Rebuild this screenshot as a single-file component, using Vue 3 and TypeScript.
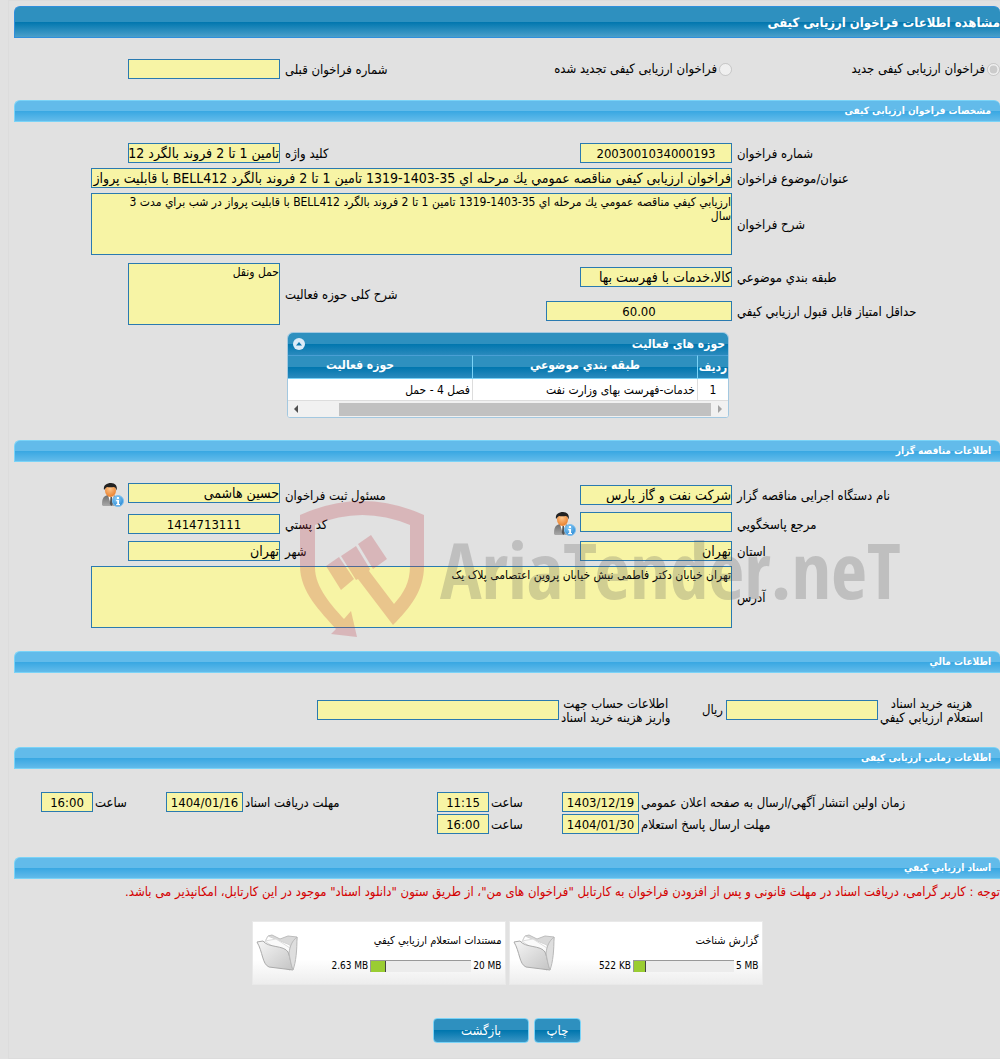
<script setup lang="ts">
import { ref } from 'vue'

interface DocumentBox {
  id: string
  title: string
  used: string
  limit: string
  percent: number
}

interface ActivityRow {
  index: number
  category: string
  field: string
}

const tenderKind = ref<'new' | 'renewed'>('new')

const activities: ActivityRow[] = [
  { index: 1, category: 'خدمات-فهرست بهای وزارت نفت', field: 'فصل 4 - حمل' },
]

const documents: DocumentBox[] = [
  { id: 'report', title: 'گزارش شناخت', used: '522 KB', limit: '5 MB', percent: 12 },
  { id: 'docs', title: 'مستندات استعلام ارزيابي كيفي', used: '2.63 MB', limit: '20 MB', percent: 15 },
]
</script>

<template>
  <main class="page" dir="rtl">
    <svg class="defs" width="0" height="0" aria-hidden="true">
      <defs>
        <linearGradient id="suit" x1="0" y1="0" x2="0" y2="1">
          <stop offset="0" stop-color="#6d6d6d" />
          <stop offset="1" stop-color="#a9a9a9" />
        </linearGradient>
        <radialGradient id="skin" cx=".45" cy=".35" r=".7">
          <stop offset="0" stop-color="#ffc98f" />
          <stop offset="1" stop-color="#e87a24" />
        </radialGradient>
        <radialGradient id="badge" cx=".4" cy=".3" r=".8">
          <stop offset="0" stop-color="#8fd0f8" />
          <stop offset="1" stop-color="#1c7fd0" />
        </radialGradient>
        <linearGradient id="flap" x1="0" y1="0" x2="1" y2="1">
          <stop offset="0" stop-color="#f6f6f6" />
          <stop offset="1" stop-color="#c4c4c4" />
        </linearGradient>
        <symbol id="person" viewBox="0 0 24 24">
          <path d="M2 22c0-6 1-9 6-10h5c4 1 6 4 6 11H3z" fill="url(#suit)" />
          <path d="M8 12l3 10 3-10z" fill="#fff" />
          <path d="M10.500 14H12l.8 7-1.500 2-1.500-2z" fill="#555" />
          <ellipse cx="10.500" cy="7.500" rx="5.500" ry="6.500" fill="url(#skin)" />
          <path d="M4 7C3 2 7 0 11 0s7 3 5.500 7.500C16 5 15 4 13.500 4c-3 .6-5 0-6.500 0C5.500 5 5 6 4 7z" fill="#222" />
          <circle cx="18" cy="18" r="5.500" fill="url(#badge)" stroke="#7fc0ee" />
          <path d="M17 14h2v2h-2zM16.200 17H19v4h1v1.200h-3.800V21h1v-2.800h-1z" fill="#fff" />
        </symbol>
        <symbol id="folder" viewBox="0 0 42 38">
          <path d="M9 8l3-6 4-1 8 4 8-3 9 1-2 17-5 16L8 26z" fill="#d9d9d9" stroke="#bdbdbd" />
          <path d="M8 10l4-8 22 9 2 14z" fill="#fff" stroke="#d2d2d2" />
          <path d="M9 7l11-2 14 9-2 10z" fill="#fafafa" stroke="#dedede" />
          <path d="M1 8l6-1c5 7 21 4 25 11 2 5 3 12 5 18L13 33C6 30 7 18 1 8z" fill="url(#flap)" stroke="#aaa" />
          <path d="M37 36c3-8 4-20 4-33-5 4-7 9-8 16 1 6 2 12 4 17z" fill="#dedede" stroke="#b9b9b9" />
        </symbol>
      </defs>
    </svg>

    <div class="panel">
      <h1 class="title">مشاهده اطلاعات فراخوان ارزیابی کیفی</h1>

      <section class="block">
        <div class="row">
          <div class="choice">
            <input id="kind-new" v-model="tenderKind" type="radio" name="kind" value="new" disabled />
            <label for="kind-new">فراخوان ارزیابی کیفی جدید</label>
          </div>
          <div class="middle">
            <div class="choice">
              <input id="kind-renewed" v-model="tenderKind" type="radio" name="kind" value="renewed" disabled />
              <label for="kind-renewed">فراخوان ارزیابی کیفی تجدید شده</label>
            </div>
            <label class="tag" for="previous">شماره فراخوان قبلی</label>
          </div>
          <input id="previous" class="field" type="text" readonly />
        </div>
      </section>

      <h2 class="bar">مشخصات فراخوان ارزیابی کیفی</h2>
      <section class="block form">
        <div class="row">
          <label class="tag" for="number">شماره فراخوان</label>
          <div class="middle">
            <input id="number" class="field num" type="text" readonly value="2003001034000193" />
            <label class="tag" for="keyword">كليد واژه</label>
          </div>
          <input id="keyword" class="field" type="text" readonly value="تامین 1 تا 2 فروند بالگرد 412" />
        </div>
        <div class="row">
          <label class="tag" for="subject">عنوان/موضوع فراخوان</label>
          <input id="subject" class="field wide" type="text" readonly value="فراخوان ارزیابی کیفی مناقصه عمومي يك مرحله اي 35-1403-1319 تامین 1 تا 2 فروند بالگرد BELL412 با قابلیت پرواز" />
        </div>
        <div class="row">
          <label class="tag" for="description">شرح فراخوان</label>
          <textarea id="description" class="field wide area" readonly>ارزيابي كيفي مناقصه عمومي يك مرحله اي 35-1403-1319 تامین 1 تا 2 فروند بالگرد BELL412 با قابلیت پرواز در شب براي مدت 3&#10;سال</textarea>
        </div>
        <div class="row double">
          <label class="tag upper" for="category">طبقه بندي موضوعي</label>
          <div class="middle upper">
            <input id="category" class="field" type="text" readonly value="کالا،خدمات با فهرست بها" />
          </div>
          <label class="tag tall" for="activity">شرح کلی حوزه فعالیت</label>
          <textarea id="activity" class="field area tall-field" readonly>حمل ونقل</textarea>
          <label class="tag lower" for="score">حداقل امتیاز قابل قبول ارزيابي كيفي</label>
          <div class="middle lower">
            <input id="score" class="field score num" type="text" readonly value="60.00" />
          </div>
        </div>

        <div class="grid-box">
          <div class="grid-title">
            <span>حوزه های فعالیت</span>
            <button type="button" class="fold" aria-label="بستن جدول">
              <svg viewBox="0 0 12 12" width="12" height="12"><path d="M3 7.500L6 4l3 3.500z" fill="#0c77ae" /></svg>
            </button>
          </div>
          <div class="grid-view">
            <table>
              <colgroup><col class="c-index" /><col class="c-wide" /><col class="c-wide" /></colgroup>
              <thead>
                <tr><th>ردیف</th><th>طبقه بندي موضوعي</th><th>حوزه فعالیت</th></tr>
              </thead>
              <tbody>
                <tr v-for="a in activities" :key="a.index">
                  <td class="center">{{ a.index }}</td><td>{{ a.category }}</td><td>{{ a.field }}</td>
                </tr>
              </tbody>
            </table>
          </div>
          <div class="scroll" aria-hidden="true">
            <svg viewBox="0 0 6 8" width="6" height="8"><path d="M1 0l4 4-4 4z" fill="#a3a3a3" /></svg>
            <div class="thumb"></div>
            <svg viewBox="0 0 6 8" width="6" height="8"><path d="M5 0L1 4l4 4z" fill="#505050" /></svg>
          </div>
        </div>
      </section>

      <h2 class="bar">اطلاعات مناقصه گزار</h2>
      <section class="block form owner">
        <div class="row person-row">
          <label class="tag" for="agency">نام دستگاه اجرایی مناقصه گزار</label>
          <div class="middle">
            <input id="agency" class="field" type="text" readonly value="شرکت نفت و گاز پارس" />
            <label class="tag" for="registrar">مسئول ثبت فراخوان</label>
          </div>
          <div class="with-icon">
            <input id="registrar" class="field" type="text" readonly value="حسین هاشمی" />
            <svg class="person"><use href="#person" /></svg>
          </div>
        </div>
        <div class="row person-row">
          <label class="tag" for="responder">مرجع پاسخگويي</label>
          <div class="middle">
            <div class="with-icon">
              <input id="responder" class="field" type="text" readonly />
              <svg class="person"><use href="#person" /></svg>
            </div>
            <label class="tag" for="postal">كد پستي</label>
          </div>
          <input id="postal" class="field num" type="text" readonly value="1414713111" />
        </div>
        <div class="row">
          <label class="tag" for="province">استان</label>
          <div class="middle">
            <input id="province" class="field" type="text" readonly value="تهران" />
            <label class="tag" for="city">شهر</label>
          </div>
          <input id="city" class="field" type="text" readonly value="تهران" />
        </div>
        <div class="row">
          <label class="tag" for="address">آدرس</label>
          <textarea id="address" class="field wide area" readonly>تهران خیابان دکتر فاطمی نبش خیابان پروین اعتصامی پلاک یک</textarea>
        </div>

        <div class="watermark" dir="ltr" aria-hidden="true">
          <svg class="shield" viewBox="300 500 126 138" width="126" height="138">
            <path d="M300 515Q362 487 424 515V566C424 590 411 607 393 625L358 579 356 580 341 556 356 546 370 569 369 571 394 604C404 593 410 582 410 566V525Q362 505 315 525V568C315 587 332 606 344 619L351 611 357 637 331 634 336 629C321 612 300 592 300 566Z" />
            <path d="M326 566l13-9 15 22-13 11zM358 544l13-9 16 24-14 10z" />
          </svg>
          <span class="brand">AriaTender.neT</span>
        </div>
      </section>

      <h2 class="bar">اطلاعات مالي</h2>
      <section class="block">
        <div class="row cost">
          <label class="tag stacked" for="fee">هزینه خرید اسناد<br />استعلام ارزيابي كيفي</label>
          <div class="middle">
            <div class="with-unit">
              <input id="fee" class="field" type="text" readonly />
              <span>ریال</span>
            </div>
            <label class="tag stacked" for="account">اطلاعات حساب جهت<br />واریز هزینه خرید اسناد</label>
          </div>
          <input id="account" class="field account" type="text" readonly />
        </div>
      </section>

      <h2 class="bar">اطلاعات زمانی ارزیابی کیفی</h2>
      <section class="block dates">
        <div class="row times">
          <label class="tag" for="publish-date">زمان اولین انتشار آگهي/ارسال به صفحه اعلان عمومي</label>
          <div class="middle">
            <input id="publish-date" class="field date num" type="text" readonly value="1403/12/19" />
            <label class="tag" for="publish-time">ساعت</label>
          </div>
          <div class="middle">
            <input id="publish-time" class="field time num" type="text" readonly value="11:15" />
            <label class="tag" for="receive-date">مهلت دریافت اسناد</label>
          </div>
          <div class="middle">
            <input id="receive-date" class="field date num" type="text" readonly value="1404/01/16" />
            <label class="tag" for="receive-time">ساعت</label>
          </div>
          <input id="receive-time" class="field time num" type="text" readonly value="16:00" />
        </div>
        <div class="row times">
          <label class="tag" for="reply-date">مهلت ارسال پاسخ استعلام</label>
          <div class="middle">
            <input id="reply-date" class="field date num" type="text" readonly value="1404/01/30" />
            <label class="tag" for="reply-time">ساعت</label>
          </div>
          <input id="reply-time" class="field time num" type="text" readonly value="16:00" />
        </div>
      </section>

      <h2 class="bar">اسناد ارزيابي كيفي</h2>
      <p class="notice">توجه : کاربر گرامی، دریافت اسناد در مهلت قانونی و پس از افزودن فراخوان به کارتابل "فراخوان های من"، از طریق ستون "دانلود اسناد" موجود در این کارتابل، امکانپذیر می باشد.</p>

      <div class="cards">
        <article v-for="d in documents" :key="d.id" class="card">
          <div class="card-text">
            <span>{{ d.title }}</span>
            <div class="usage">
              <span dir="ltr">{{ d.limit }}</span>
              <div class="meter"><div class="fill" :style="{ width: d.percent + '%' }"></div></div>
              <span dir="ltr">{{ d.used }}</span>
            </div>
          </div>
          <svg class="folder"><use href="#folder" /></svg>
        </article>
      </div>

      <div class="actions">
        <button type="button" class="btn">چاپ</button>
        <button type="button" class="btn back">بازگشت</button>
      </div>
    </div>
  </main>
</template>

<style>
body {
  background: #e1e1e1;
}
</style>

<style scoped>
* {
  box-sizing: border-box;
}
.page {
  padding: 0 0 0 8px;
  overflow: hidden;
  background: #e1e1e1;
  color: #000;
  font: 13px/14px "DejaVu Sans Condensed", "DejaVu Sans", sans-serif;
}
.defs {
  position: absolute;
}
.panel {
  padding: 5px 0 15px 5px;
  border: 1px solid #dcdcdc;
  border-right: 0;
}
.title,
.bar {
  margin: 0;
  color: #fff;
  font-weight: bold;
}
.title {
  height: 32px;
  border: 1px solid #2f8fdc;
  border-right: 0;
  border-radius: 6px 6px 0 0;
  background: linear-gradient(#2e90bf 50%, #0076ae 50%, #4a9fca);
  font-size: 13px;
  line-height: 32px;
}
.bar {
  height: 22px;
  padding: 0 9px;
  border: 1px solid #7ad3f7;
  border-right: 0;
  border-radius: 6px 6px 0 0;
  background: linear-gradient(#62bbea 50%, #38a7e2 50%, #62bbea);
  font-size: 10px;
  line-height: 20px;
}
.block {
  padding: 21px 0;
}
.form {
  display: flex;
  flex-direction: column;
  gap: 5px;
}
.row {
  display: grid;
  grid-template-columns: 268fr 452fr 266fr;
  align-items: center;
}
.middle {
  display: flex;
  align-items: center;
  justify-content: space-between;
}
.choice {
  display: flex;
  align-items: center;
  gap: 2px;
}
.choice input {
  width: 13px;
  height: 13px;
  margin: 0;
}
.tag {
  padding-top: 2px;
  padding-left: 5px;
  text-align: left;
  white-space: nowrap;
}
.field {
  display: block;
  width: 152px;
  height: 20px;
  margin: 0;
  padding: 0;
  border: 1px solid #2a7ab0;
  border-radius: 0;
  background: #f7f4a5;
  color: #000;
  font: 14px/18px "DejaVu Sans Condensed", "DejaVu Sans", sans-serif;
  outline: none;
}
.num {
  font-size: 13px;
  text-align: center;
}
.wide {
  grid-column: 2 / 4;
  width: auto;
  margin-left: 77px;
}
.area {
  height: 62px;
  padding-top: 1px;
  resize: none;
  overflow: hidden;
  font-size: 12px;
  line-height: 14px;
}
.double {
  grid-template-rows: 30px 30px;
  row-gap: 4px;
  padding-top: 2px;
}
.double > .tag {
  grid-column: 1;
}
.double > .middle {
  grid-column: 2;
}
.double > .upper {
  grid-row: 1;
}
.double > .lower {
  grid-row: 2;
}
.double > .tall {
  grid-column: 2;
  grid-row: 1 / 3;
  justify-self: end;
}
.tall-field {
  grid-column: 3;
  grid-row: 1 / 3;
}
.score {
  width: 186px;
}
.grid-box {
  width: 442px;
  margin-top: 1px;
  margin-bottom: 1px;
  margin-right: 271px;
  overflow: hidden;
  border: 1px solid #a3c8e0;
  border-radius: 6px 6px 3px 3px;
  background: #fff;
}
.grid-title {
  display: flex;
  align-items: center;
  justify-content: space-between;
  height: 22px;
  padding: 0 3px 0 5px;
  background: linear-gradient(#2e90bf 50%, #0076ae 50%, #2a8abd);
  color: #fff;
  font-size: 12px;
  font-weight: bold;
}
.fold {
  width: 12px;
  height: 12px;
  padding: 0;
  border: 0;
  border-radius: 50%;
  background: #dcebf7;
}
.fold svg {
  display: block;
}
.grid-view {
  overflow: hidden;
}
table {
  width: 481px;
  border-spacing: 0;
  table-layout: fixed;
  font-size: 12px;
}
.c-index {
  width: 31px;
}
.c-wide {
  width: 225px;
}
th {
  height: 24px;
  padding: 0 0 4px;
  border-left: 1px solid #7ad3f7;
  border-top: 1px solid #4a9fd4;
  border-bottom: 1px solid #7ad3f7;
  background: linear-gradient(#2e90bf 50%, #0076ae 50%, #2a8abd);
  color: #fff;
}
th:first-child {
  padding-bottom: 0;
}
td {
  height: 22px;
  padding: 0 2px;
  border-left: 1px solid #ddd;
  border-bottom: 1px solid #ddd;
}
.center {
  text-align: center;
}
.scroll {
  display: flex;
  align-items: center;
  justify-content: space-between;
  height: 16px;
  padding: 0 5px;
  background: #f1f1f1;
}
.thumb {
  width: 372px;
  height: 13px;
  margin: 0 6px 0 auto;
  background: #c1c1c1;
}
.owner {
  position: relative;
  padding-bottom: 23px;
}
.person-row {
  min-height: 24px;
}
.with-icon {
  display: flex;
  align-items: flex-start;
  gap: 4px;
}
.person {
  width: 24px;
  height: 24px;
}
.watermark {
  position: absolute;
  top: 38px;
  left: 29%;
  display: flex;
  align-items: center;
  gap: 14px;
  pointer-events: none;
}
.shield {
  fill: rgba(193, 57, 67, 0.25);
}
.brand {
  color: rgba(93, 93, 93, 0.25);
  font: bold 78px/84px "Liberation Sans Narrow", "Open Sans Condensed", "Roboto Condensed", "Liberation Sans", sans-serif;
}
.cost {
  grid-template-columns: 122fr 319fr 545fr;
  min-height: 32px;
}
.cost .tag {
  padding-left: 2px;
}
.cost .stacked {
  justify-self: end;
  text-align: center;
}
.with-unit {
  display: flex;
  align-items: center;
  gap: 3px;
}
.account {
  width: 242px;
}
.dates {
  display: flex;
  flex-direction: column;
  gap: 2px;
  padding: 23px 0;
}
.times {
  grid-template-columns: 361fr 150fr 246fr 150fr 79fr;
}
.times .tag {
  padding-left: 2px;
}
.date {
  width: 77px;
}
.time {
  width: 52px;
}
.notice {
  margin: 6px 0 22px;
  color: #d40000;
  line-height: 14px;
  white-space: nowrap;
}
.cards {
  display: flex;
  justify-content: center;
  gap: 3px;
}
.card {
  display: flex;
  align-items: center;
  justify-content: space-between;
  width: 254px;
  height: 64px;
  padding: 0 3px 0 3px;
  border: 1px solid #e9e9e9;
  background: linear-gradient(#fff 60%, #ededed);
  font-size: 11px;
}
.card-text {
  display: flex;
  flex-direction: column;
  gap: 11px;
}
.usage {
  display: flex;
  align-items: center;
  gap: 2px;
  font-size: 10px;
}
.meter {
  display: flex;
  justify-content: flex-end;
  width: 101px;
  height: 12px;
  border-top: 1px solid #999;
  border-left: 1px solid #999;
  background: #ececec;
}
.fill {
  border-right: 1px solid #444;
  background: #9acd32;
}
.folder {
  width: 42px;
  height: 38px;
}
.actions {
  display: flex;
  justify-content: center;
  gap: 5px;
  margin-top: 33px;
}
.btn {
  width: 47px;
  height: 25px;
  padding: 0;
  border: 1px solid #7ad3f7;
  border-radius: 4px;
  background: linear-gradient(#2e90bf 50%, #0076ae 50%, #3a95c4);
  color: #fff;
  font: 13px/22px "DejaVu Sans Condensed", "DejaVu Sans", sans-serif;
}
.back {
  width: 96px;
}
</style>
